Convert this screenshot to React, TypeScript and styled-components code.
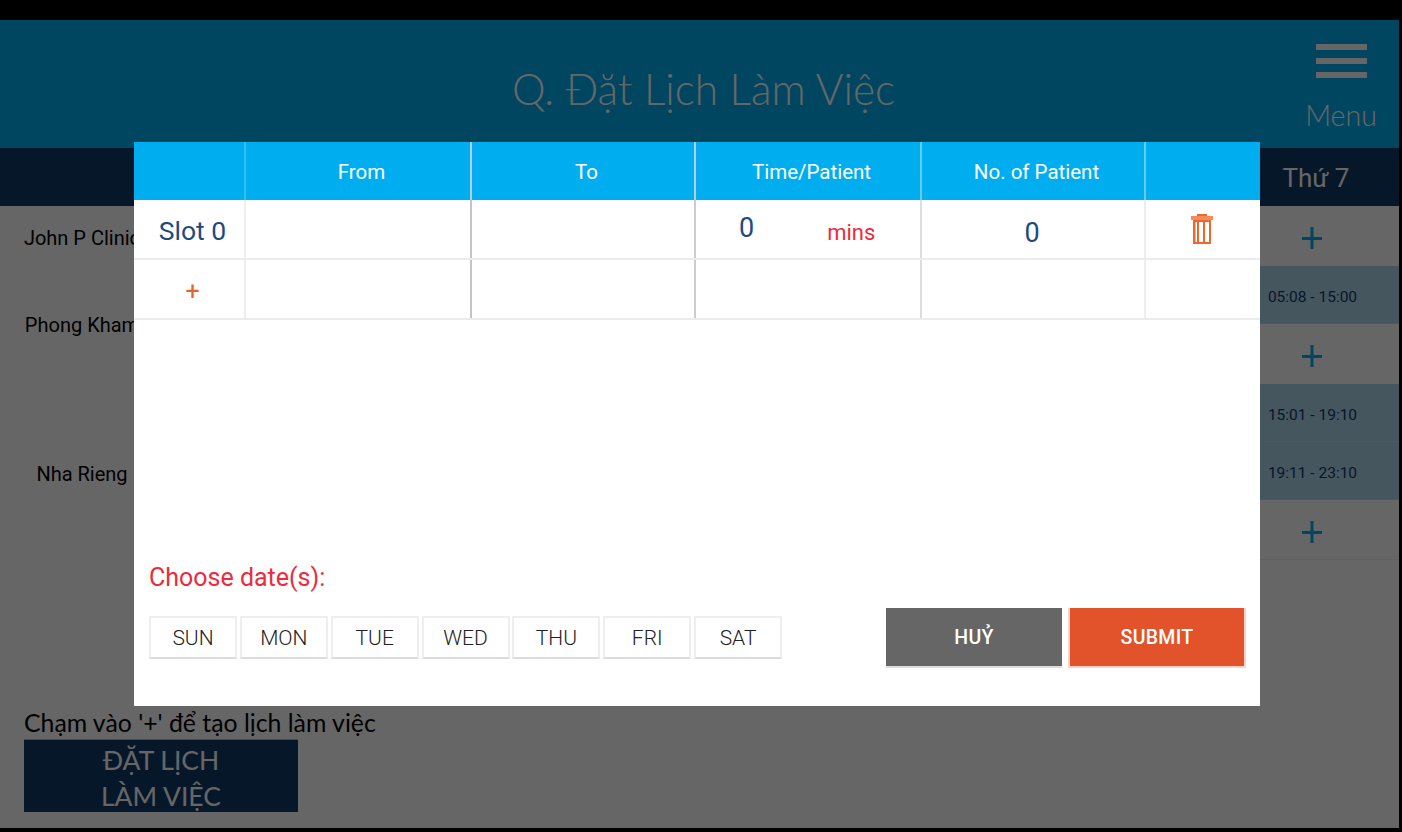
import styled, { createGlobalStyle } from "styled-components";

const GlobalStyle = createGlobalStyle`
  html, body {
    margin: 0;
    padding: 0;
    background: #000;
  }
  * {
    box-sizing: border-box;
  }
`;

const navy = "#0f3a68";
const cyan = "#00aeef";
const columns = "112px 226px 224px 226px 224px 114px";
const brand = `"Lato", "Open Sans", sans-serif`;

const Frame = styled.div`
  width: 1402px;
  height: 832px;
  padding: 20px 3px 4px 0;
  overflow: hidden;
`;

const Screen = styled.div`
  height: 100%;
  background: #fff;
  display: flex;
  flex-direction: column;
`;

const TopBar = styled.header`
  height: 128px;
  flex: none;
  background: ${cyan};
  display: grid;
  grid-template-columns: 1fr auto 1fr;
  align-items: center;
  color: #fff;
`;

const PageTitle = styled.h1`
  grid-column: 2;
  margin: 8px 0 0 8px;
  font: 300 42.4px ${brand};
`;

const MenuButton = styled.div`
  justify-self: end;
  align-self: start;
  width: 72px;
  margin-right: 22px;
  padding-top: 24px;
  display: flex;
  flex-direction: column;
  align-items: center;
  font: 300 28.5px/32px ${brand};
`;

const MenuBars = styled.div`
  width: 51px;
  height: 34px;
  margin-bottom: 21px;
  border-top: 6px solid #fff;
  border-bottom: 6px solid #fff;
  display: flex;
  align-items: center;
  &::before {
    content: "";
    width: 100%;
    height: 6px;
    background: #fff;
  }
`;

const WeekRow = styled.div`
  height: 58px;
  flex: none;
  background: ${navy};
  display: flex;
  justify-content: flex-end;
`;

const WeekDay = styled.div`
  width: 170px;
  padding: 2px 0 0 4px;
  display: flex;
  align-items: center;
  justify-content: center;
  color: #fff;
  font: 400 26px Roboto, sans-serif;
`;

const Group = styled.section`
  display: flex;
  justify-content: space-between;
`;

const ClinicName = styled.div<{ $low?: boolean }>`
  width: 164px;
  padding-top: ${(p) => (p.$low ? "4px" : "0")};
  display: flex;
  align-items: center;
  justify-content: center;
  white-space: nowrap;
  overflow: hidden;
  color: #000;
  font: 400 20px Roboto, sans-serif;
`;

const DayColumn = styled.div`
  width: 170px;
`;

const AddCell = styled.div<{ $ruled?: boolean }>`
  height: 60px;
  padding: 4px 4px 0 0;
  border-bottom: ${(p) => (p.$ruled ? "1px solid #f2f2f2" : "none")};
  display: flex;
  align-items: center;
  justify-content: center;
  color: ${cyan};
`;

const SlotCell = styled.div`
  height: 58px;
  padding: 4px 3px 0 0;
  background: #afd7ed;
  border-bottom: 1px solid #b9ddf0;
  display: flex;
  align-items: center;
  justify-content: center;
  color: ${navy};
  font: 400 15.5px Roboto, sans-serif;
`;

const Hint = styled.div`
  margin: auto 0 0 24px;
  color: #000;
  font: 400 24.8px ${brand};
  line-height: 30px;
`;

const BigButton = styled.div`
  width: 274px;
  height: 72px;
  margin: 2px 0 16px 24px;
  padding-top: 4px;
  flex: none;
  background: ${navy};
  box-shadow: 0 -1px 0 #b0bcc8;
  display: flex;
  flex-direction: column;
  align-items: center;
  justify-content: center;
  color: #fff;
  font: 400 26.5px/36px ${brand};
`;

const Overlay = styled.div`
  position: fixed;
  inset: 0;
  padding: 142px 142px 126px 134px;
  background: rgba(0, 0, 0, 0.6);
  display: flex;
`;

const Modal = styled.div`
  flex: 1;
  background: #fff;
  display: flex;
  flex-direction: column;
`;

const TableRow = styled.div<{ $head?: boolean }>`
  height: ${(p) => (p.$head ? "58px" : "60px")};
  display: grid;
  grid-template-columns: ${columns};
  background: ${(p) => (p.$head ? cyan : "#fff")};
  border-bottom: ${(p) => (p.$head ? "none" : "2px solid #ececec")};
`;

const Cell = styled.div<{ $line?: string }>`
  display: flex;
  align-items: center;
  justify-content: center;
  border-right: 2px solid ${(p) => p.$line ?? "transparent"};
`;

const HeadLabel = styled.span`
  margin: 2px 0 0 7px;
  color: #fff;
  font: 400 20.5px Roboto, sans-serif;
`;

const SlotName = styled.span`
  margin: 2px 0 0 7px;
  color: #1e4a7e;
  font: 400 26.5px Roboto, sans-serif;
`;

const TimeCell = styled(Cell)`
  justify-content: flex-start;
  padding-left: 43px;
`;

const Count = styled.span<{ $up?: boolean }>`
  color: #1e4a7e;
  font: 400 27px Roboto, sans-serif;
  margin: ${(p) => (p.$up ? "0 0 2px" : "8px 2px 0 0")};
`;

const Unit = styled.span`
  margin: 6px 0 0 73px;
  color: #ee2a3c;
  font: 400 22px Roboto, sans-serif;
`;

const SmallPlus = styled.span`
  margin: 4px 0 0 7px;
  color: #e2652b;
  font: 400 25px Roboto, sans-serif;
`;

const ModalFooter = styled.div`
  margin-top: auto;
  padding: 0 14px 38px 15px;
  display: flex;
  justify-content: space-between;
  align-items: flex-end;
`;

const DatePicker = styled.div`
  padding-bottom: 9px;
`;

const DateLabel = styled.div`
  margin-bottom: 24px;
  color: #ee2a3c;
  font: 400 25px/28px Roboto, sans-serif;
`;

const DayList = styled.div`
  display: flex;
  gap: 2.85px;
`;

const DayButton = styled.div`
  width: 88px;
  height: 43px;
  border: 2px solid #eee;
  border-bottom-color: #dcdcdc;
  display: flex;
  align-items: center;
  justify-content: center;
  color: #222;
  font: 300 21px Roboto, sans-serif;
`;

const Actions = styled.div`
  display: flex;
  gap: 6px;
`;

const ActionButton = styled.div<{ $primary?: boolean }>`
  width: ${(p) => (p.$primary ? "178px" : "176px")};
  height: 60px;
  background: ${(p) => (p.$primary ? "#e2522b" : "#666")};
  border-bottom: 2px solid ${(p) => (p.$primary ? "#f9d3c8" : "#ddd")};
  border-left: ${(p) => (p.$primary ? "2px solid #f9d3c8" : "none")};
  border-right: ${(p) => (p.$primary ? "2px solid #f9d3c8" : "none")};
  display: flex;
  align-items: center;
  justify-content: center;
  color: #fff;
  letter-spacing: 0.3px;
  font: 500 19.5px Roboto, sans-serif;
`;

const PlusIcon = () => (
  <svg width="20" height="22" viewBox="0 0 20 22">
    <path d="M0 10h20v3H0zM8.500 0h3v22h-3z" fill="currentColor" />
  </svg>
);

const TrashIcon = () => (
  <svg width="22" height="30" viewBox="0 0 22 30">
    <path d="M6 0h10v2H6z" fill="#f0672d" />
    <path d="M0 2h22v4H0z" fill="#f58a5c" />
    <path
      d="M2 6h18v24H2zM4.500 8v20H6V8zM8 8v20h4V8zM14 8v20h4V8z"
      fill="#f0672d"
      fillRule="evenodd"
    />
  </svg>
);

const days = ["SUN", "MON", "TUE", "WED", "THU", "FRI", "SAT"];

export default function App() {
  return (
    <Frame>
      <GlobalStyle />
      <Screen>
        <TopBar>
          <PageTitle>Q. Đặt Lịch Làm Việc</PageTitle>
          <MenuButton>
            <MenuBars />
            Menu
          </MenuButton>
        </TopBar>
        <WeekRow>
          <WeekDay>Thứ 7</WeekDay>
        </WeekRow>
        <Group>
          <ClinicName $low>John P Clinic</ClinicName>
          <DayColumn>
            <AddCell>
              <PlusIcon />
            </AddCell>
          </DayColumn>
        </Group>
        <Group>
          <ClinicName>Phong Kham</ClinicName>
          <DayColumn>
            <SlotCell>05:08 - 15:00</SlotCell>
            <AddCell>
              <PlusIcon />
            </AddCell>
          </DayColumn>
        </Group>
        <Group>
          <ClinicName $low>Nha Rieng</ClinicName>
          <DayColumn>
            <SlotCell>15:01 - 19:10</SlotCell>
            <SlotCell>19:11 - 23:10</SlotCell>
            <AddCell $ruled>
              <PlusIcon />
            </AddCell>
          </DayColumn>
        </Group>
        <Hint>Chạm vào '+' để tạo lịch làm việc</Hint>
        <BigButton>
          <span>ĐẶT LỊCH</span>
          <span>LÀM VIỆC</span>
        </BigButton>
      </Screen>
      <Overlay>
        <Modal>
          <TableRow $head>
            <Cell $line="#33bef2" />
            <Cell $line="#b5cdd8">
              <HeadLabel>From</HeadLabel>
            </Cell>
            <Cell $line="#b5cdd8">
              <HeadLabel>To</HeadLabel>
            </Cell>
            <Cell $line="#66cbf2">
              <HeadLabel>Time/Patient</HeadLabel>
            </Cell>
            <Cell $line="#66cbf2">
              <HeadLabel>No. of Patient</HeadLabel>
            </Cell>
            <Cell />
          </TableRow>
          <TableRow>
            <Cell $line="#eee">
              <SlotName>Slot 0</SlotName>
            </Cell>
            <Cell $line="#c4c4c4" />
            <Cell $line="#ccc" />
            <TimeCell $line="#ddd">
              <Count $up>0</Count>
              <Unit>mins</Unit>
            </TimeCell>
            <Cell $line="#eee">
              <Count>0</Count>
            </Cell>
            <Cell>
              <TrashIcon />
            </Cell>
          </TableRow>
          <TableRow>
            <Cell $line="#eee">
              <SmallPlus>+</SmallPlus>
            </Cell>
            <Cell $line="#c4c4c4" />
            <Cell $line="#ccc" />
            <Cell $line="#ddd" />
            <Cell $line="#eee" />
            <Cell />
          </TableRow>
          <ModalFooter>
            <DatePicker>
              <DateLabel>Choose date(s):</DateLabel>
              <DayList>
                {days.map((day) => (
                  <DayButton key={day}>{day}</DayButton>
                ))}
              </DayList>
            </DatePicker>
            <Actions>
              <ActionButton>HUỶ</ActionButton>
              <ActionButton $primary>SUBMIT</ActionButton>
            </Actions>
          </ModalFooter>
        </Modal>
      </Overlay>
    </Frame>
  );
}
